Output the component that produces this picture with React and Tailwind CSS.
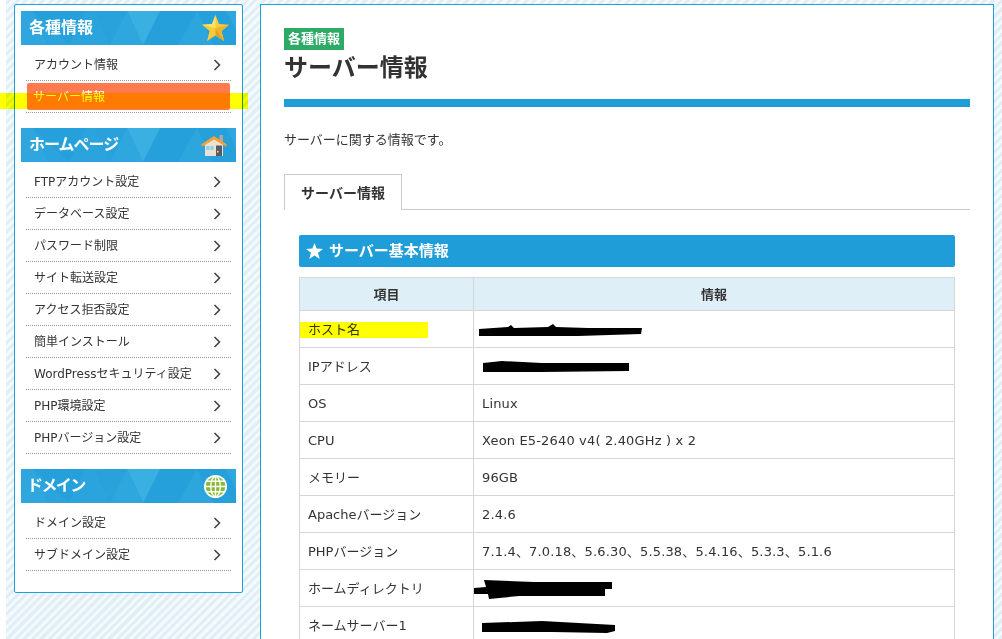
import React from "react";

const font = "font-['DejaVu_Sans','Noto_Sans_CJK_JP',sans-serif]";

const Chevron = () => (
  <svg width="8" height="12" viewBox="0 0 8 12" className="shrink-0">
    <path d="M1.5 1 L6.5 6 L1.5 11" fill="none" stroke="#444" strokeWidth="1.6" />
  </svg>
);

const Star = () => (
  <svg width="27" height="26" viewBox="0 0 27 26" className="mr-[7px]">
    <path d="M13.5 0 L17 9 L27 9.8 L19.5 16 L22 26 L13.5 20.5 L5 26 L7.5 16 L0 9.8 L10 9 Z" fill="#f7cb3a" />
    <path d="M13.5 0 L13.5 13 L0 9.8 L10 9 Z" fill="#fde36a" />
    <path d="M13.5 13 L22 26 L13.5 20.5 Z" fill="#e2a322" />
    <path d="M13.5 13 L27 9.8 L19.5 16 L22 26 Z" fill="#edb62a" />
  </svg>
);

const House = () => (
  <svg width="26" height="21" viewBox="0 0 26 21" className="mr-[9px]">
    <rect x="18.5" y="0" width="3.5" height="7" fill="#b0a79c" />
    <path d="M4 9 L13 3 L22 9 V21 H4 Z" fill="#e9e1d6" />
    <path d="M0 9.5 L13 1 L26 9.5 L24.5 11.5 L13 4.5 L1.5 11.5 Z" fill="#f7a134" />
    <rect x="5.5" y="11" width="3" height="4" fill="#8fcde0" />
    <rect x="9.5" y="11" width="3" height="4" fill="#8fcde0" />
    <rect x="15" y="10.5" width="6" height="10.5" fill="#5c5c5c" />
    <rect x="16" y="16" width="1.5" height="1.5" fill="#e9e1d6" />
  </svg>
);

const Globe = () => (
  <svg width="23" height="23" viewBox="0 0 24 24" className="mr-[9px]">
    <circle cx="12" cy="12" r="12" fill="#ffffff" />
    <circle cx="12" cy="12" r="10.2" fill="#86ba35" />
    <g fill="none" stroke="#ffffff" strokeWidth="1.4">
      <ellipse cx="12" cy="12" rx="5" ry="10.5" />
      <path d="M12 1.5 V22.5 M1.5 12 H22.5 M3 6.5 H21 M3 17.5 H21" />
    </g>
  </svg>
);

const Sidebar = ({ title, titleClass, icon, items, className }) => (
  <div className={className}>
    <div className="relative h-[34px] bg-[#25a0db] flex items-center justify-between overflow-hidden">
      <svg width="215" height="34" viewBox="0 0 215 34" className="absolute left-0 top-0">
        <polygon points="0,0 12,0 27,34 0,34" fill="#2fa7de" />
        <polygon points="12,0 48,34 27,34" fill="#2ba4dd" />
        <polygon points="48,34 65,0 74,0 89,34" fill="#2ba4dd" />
        <polygon points="74,0 106,0 89,34" fill="#29a2dc" />
        <polygon points="106,0 139,0 122,34" fill="#3aafe2" />
        <polygon points="89,34 106,0 122,34" fill="#2ea7df" />
        <polygon points="157,34 176,0 192,34" fill="#2da6de" />
        <polygon points="205,0 215,0 215,20" fill="#2fa7de" />
      </svg>
      <span className={`relative text-base font-bold text-white ${titleClass}`}>{title}</span>
      <span className="relative flex items-center">{icon}</span>
    </div>
    <ul className="mt-1 mx-[5px]">
      {items.map((item) => (
        <li key={item} className="h-8 border-b border-dotted border-[#999]">
          {item === "サーバー情報" ? (
            <div className="pt-0.5">
              <a className="mx-px h-[27px] pl-[6px] flex items-center rounded-[2px] bg-[#ff7a4f] text-xs text-white">
                {item}
              </a>
            </div>
          ) : (
            <a className="h-full pl-2 pr-[10px] flex items-center justify-between text-xs text-[#333]">
              {item}
              <Chevron />
            </a>
          )}
        </li>
      ))}
    </ul>
  </div>
);

const Scribble = ({ w, h, d }) => (
  <svg width={w} height={h} viewBox={`0 0 ${w} ${h}`} className="block">
    <path d={d} fill="#000000" />
  </svg>
);

const rows = [
  ["ホスト名", <div className="-ml-1"><Scribble w={164} h={14} d="M1 6 L30 4 L33 2 L36 5 L70 4 L75 1 L78 4 L110 5 L164 5 L163 11 L100 13 L40 13 L1 13 Z" /></div>],
  ["IPアドレス", <Scribble w={147} h={12} d="M1 2 L20 0 L60 2 L147 2 L147 10 L60 11 L1 11 Z" />],
  ["OS", "Linux"],
  ["CPU", "Xeon E5-2640 v4( 2.40GHz ) x 2"],
  ["メモリー", "96GB"],
  ["Apacheバージョン", "2.4.6"],
  ["PHPバージョン", "7.1.4、7.0.18、5.6.30、5.5.38、5.4.16、5.3.3、5.1.6"],
  ["ホームディレクトリ", <div className="-ml-2"><Scribble w={138} h={20} d="M10 1 L60 3 L138 3 L138 10 L131 10 L131 17 L45 17 L15 20 L14 15 L0 15 L0 9 L12 8 Z" /></div>],
  ["ネームサーバー1", <Scribble w={133} h={13} d="M0 3 L60 1 L133 5 L133 11 L125 13 L70 12 L0 12 Z" />],
];

export default function App() {
  return (
    <div className={`relative h-[639px] overflow-hidden bg-white pl-[6px] ${font}`}>
      <div className="flex items-start gap-[17px] h-full pl-2 pt-1 pr-2 bg-[repeating-linear-gradient(-45deg,#e0eff6_0px,#e0eff6_3px,#f3f9fc_3px,#f3f9fc_6px)]">
        {/* SIDEBAR */}
        <aside className="w-[229px] h-[589px] shrink-0 bg-white border border-[#1fa0dc] rounded-[2px] px-[6px] pt-[6px]">
          <Sidebar title="各種情報" titleClass="pl-2" icon={<Star />} items={["アカウント情報", "サーバー情報"]} />
          <Sidebar
            className="mt-[15px]"
            title="ホームページ"
            titleClass="pl-2 tracking-[-1px]"
            icon={<House />}
            items={[
              "FTPアカウント設定",
              "データベース設定",
              "パスワード制限",
              "サイト転送設定",
              "アクセス拒否設定",
              "簡単インストール",
              "WordPressセキュリティ設定",
              "PHP環境設定",
              "PHPバージョン設定",
            ]}
          />
          <Sidebar
            className="mt-[15px]"
            title="ドメイン"
            titleClass="pl-[6px] tracking-[-1.6px]"
            icon={<Globe />}
            items={["ドメイン設定", "サブドメイン設定"]}
          />
        </aside>

        {/* MAIN */}
        <main className="w-[734px] h-[700px] shrink-0 bg-white border border-[#1fa0dc] px-[23px] pt-[23px] text-[#333]">
          <span className="block w-fit h-[22px] px-1 bg-[#2dab66] text-[13px] leading-[22px] font-bold text-white">
            各種情報
          </span>
          <h1 className="mt-[2px] text-2xl leading-[32px] font-bold text-[#333]">サーバー情報</h1>
          <div className="mt-[15px] h-2 bg-[#1f9dd9]" />
          <p className="mt-[23px] text-[13px] leading-5">サーバーに関する情報です。</p>

          <div className="mt-[24px] border-b border-[#ccc] h-9">
            <div className="w-[118px] h-9 border border-b-0 border-[#ccc] bg-white flex items-center justify-center text-sm font-bold">
              サーバー情報
            </div>
          </div>

          <div className="mx-[15px] mt-[25px]">
            <h2 className="h-8 px-[7px] flex items-center gap-[6px] rounded-[2px] bg-[#1f9dd9] text-[15px] font-bold text-white">
              <svg width="17" height="16" viewBox="0 0 17 16">
                <path d="M8.5 0 L10.6 5.6 L17 6 L12 9.8 L13.8 16 L8.5 12.4 L3.2 16 L5 9.8 L0 6 L6.4 5.6 Z" fill="#fff" />
              </svg>
              サーバー基本情報
            </h2>
            <table className="mt-2.5 w-full table-fixed border-collapse text-[13px]">
              <colgroup>
                <col className="w-[174px]" />
                <col />
              </colgroup>
              <thead>
                <tr className="h-[33px] bg-[#deeff8]">
                  <th className="border border-[#d6d6d6] pt-0.5 font-bold">項目</th>
                  <th className="border border-[#d6d6d6] pt-0.5 font-bold">情報</th>
                </tr>
              </thead>
              <tbody>
                {rows.map(([label, value]) => (
                  <tr key={label} className="h-[37px]">
                    <td className="border border-[#d6d6d6] pl-2 pt-0.5">{label}</td>
                    <td className="border border-[#d6d6d6] pl-2 pt-0.5 tracking-[0.16px]">{value}</td>
                  </tr>
                ))}
              </tbody>
            </table>
          </div>
        </main>
      </div>

      {/* yellow marker strokes laid over the screenshot */}
      <div className="absolute left-0 top-[93px] w-[248px] h-4 bg-[#ffff00] mix-blend-multiply" />
      <div className="absolute left-[300px] top-[322px] w-[128px] h-4 bg-[#ffff00] mix-blend-multiply" />
    </div>
  );
}
